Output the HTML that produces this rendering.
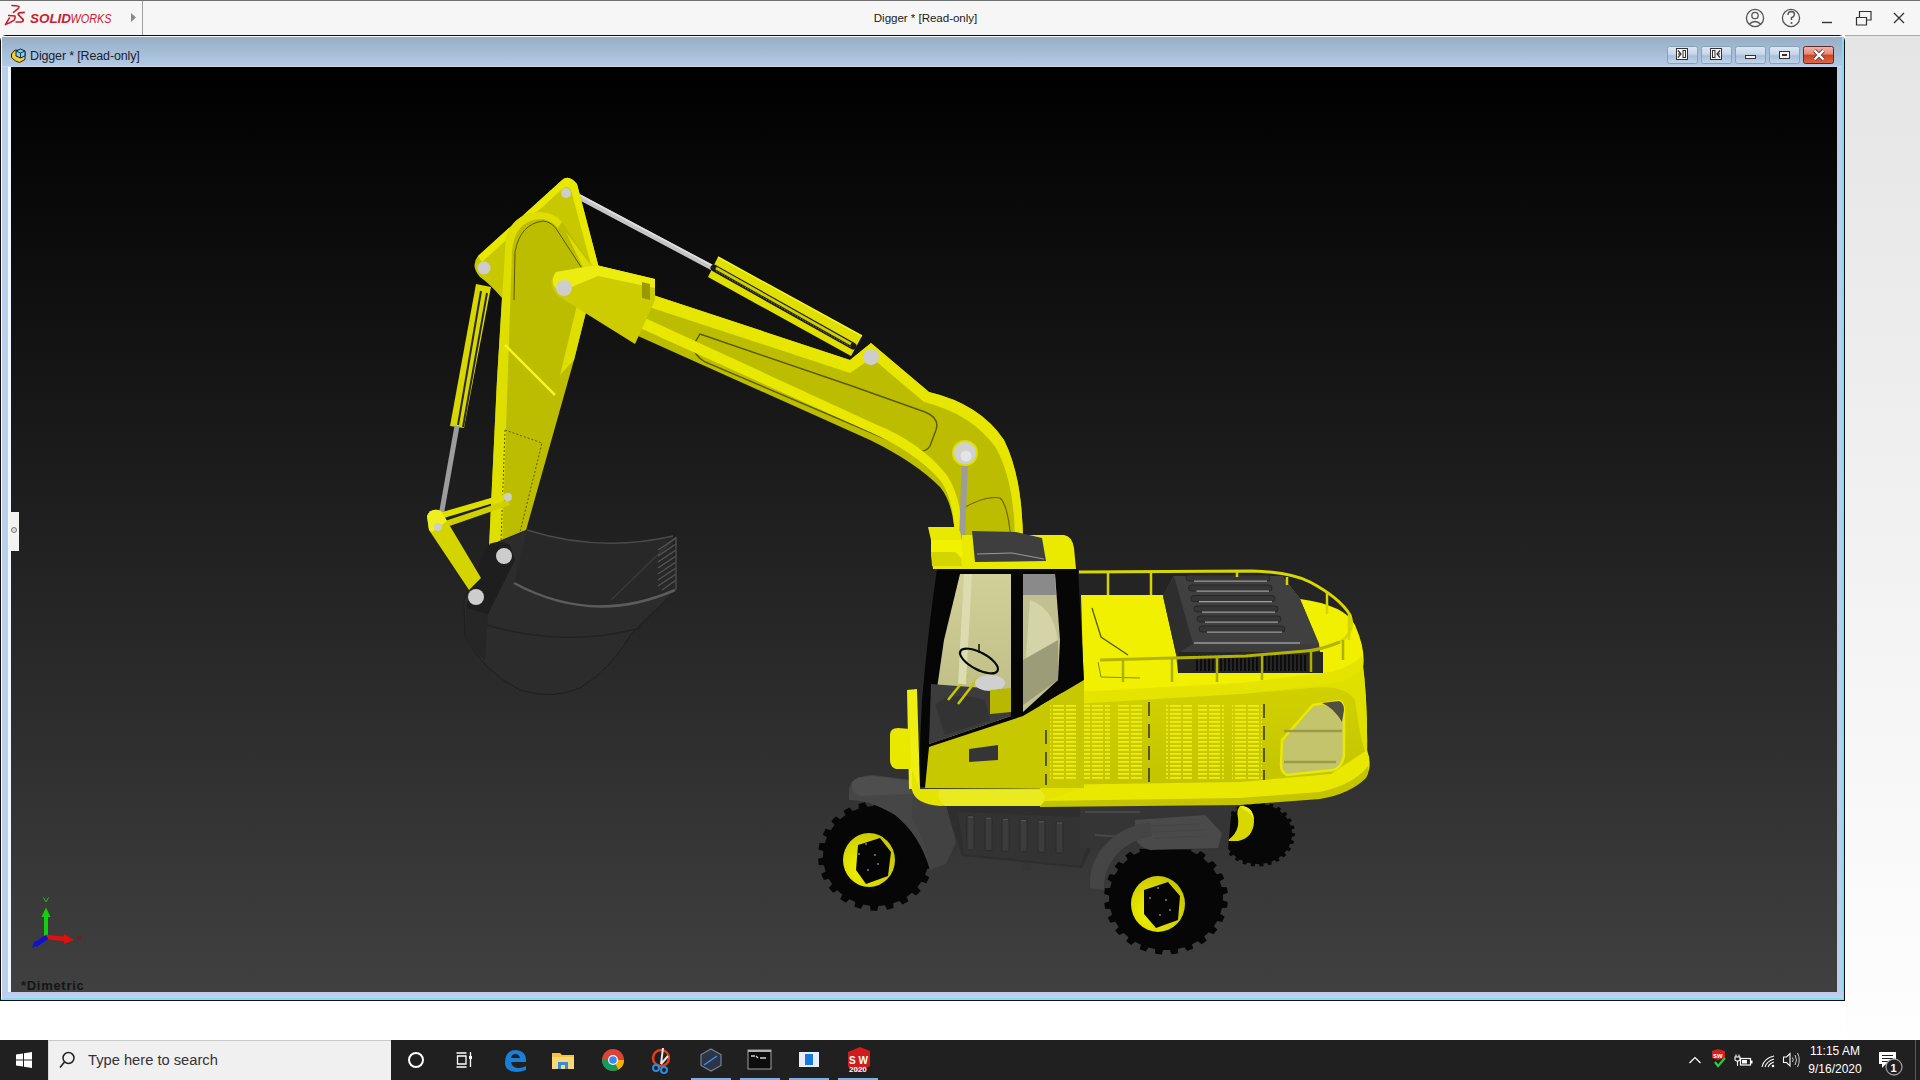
<!DOCTYPE html>
<html><head><meta charset="utf-8">
<style>
*{margin:0;padding:0;box-sizing:border-box}
html,body{width:1920px;height:1080px;overflow:hidden;background:#fff;font-family:"Liberation Sans",sans-serif;position:relative}
.a{position:absolute}
</style></head><body>
<!-- top bar -->
<div class="a" style="left:0;top:0;width:1920px;height:35px;background:#f6f6f6"></div>
<div class="a" style="left:0;top:0;width:1920px;height:1px;background:#707070"></div>
<div class="a" style="left:142px;top:1px;width:1px;height:34px;background:#a0a0a0"></div>
<svg class="a" style="left:0;top:0" width="145" height="35" viewBox="0 0 145 35">
  <path d="M11.9 5.4 Q16 5.6 18.9 6.4 Q19.2 8 18.1 8.7 L13.4 12.4" stroke="#c01e2c" stroke-width="1.5" fill="none" stroke-linecap="round"/>
  <path d="M8 15.5 Q12 15.4 15 16 Q15.5 18 14.2 20.1 Q10 23 5.4 24.6 L9.8 17.3" stroke="#c41e2c" stroke-width="1.6" fill="none" stroke-linejoin="round"/>
  <path d="M24.8 12.4 L19 12.9 Q17.8 13.5 18.3 14.6 L23.2 19.6 Q23.4 21.5 21.5 22 L15.5 22" stroke="#c41e2c" stroke-width="1.7" fill="none" stroke-linejoin="round"/>
  <text x="30" y="22.6" font-size="12.4" font-style="italic" font-weight="bold" fill="#c8202f" font-family="Liberation Sans" textLength="41" lengthAdjust="spacingAndGlyphs">SOLID</text>
  <text x="70.5" y="22.6" font-size="12.4" font-style="italic" fill="#c8202f" font-family="Liberation Sans" textLength="41" lengthAdjust="spacingAndGlyphs">WORKS</text>
  <path d="M131 13 L136 17.5 L131 22 Z" fill="#8a8a8a"/>
</svg>
<div class="a" style="left:0;top:11px;width:1851px;text-align:center;font-size:11.6px;color:#1a1a1a;letter-spacing:-0.05px">Digger * [Read-only]</div>
<svg class="a" style="left:1740px;top:0" width="180" height="35" viewBox="1740 0 180 35">
  <circle cx="1755" cy="18" r="8.6" stroke="#555" stroke-width="1.3" fill="none"/>
  <circle cx="1755" cy="15.5" r="3.2" stroke="#555" stroke-width="1.3" fill="none"/>
  <path d="M1749 24.5 Q1755 18.5 1761 24.5" stroke="#555" stroke-width="1.3" fill="none"/>
  <circle cx="1791" cy="18" r="8.6" stroke="#555" stroke-width="1.3" fill="none"/>
  <path d="M1788 15 Q1788 11.5 1791.5 11.5 Q1794.5 11.7 1794.5 14.5 Q1794.3 16.5 1791.5 17.8 L1791.5 20" stroke="#555" stroke-width="1.5" fill="none"/>
  <circle cx="1791.5" cy="23" r="1" fill="#555"/>
  <path d="M1822 22.5 H1832" stroke="#333" stroke-width="1.4"/>
  <path d="M1856.5 17.5 H1866.5 V25 H1856.5Z M1859.5 17.5 V11.5 H1871 V20 H1866.5" stroke="#333" stroke-width="1.2" fill="none"/>
  <path d="M1894 13 L1904 23 M1904 13 L1894 23" stroke="#333" stroke-width="1.3"/>
</svg>
<!-- right gradient area -->
<div class="a" style="left:1845px;top:35px;width:75px;height:1005px;background:linear-gradient(#e5e5e5,#fefefe)"></div>
<div class="a" style="left:1845px;top:35px;width:75px;height:1px;background:#a8a8a8"></div>
<!-- MDI window -->
<div class="a" style="left:0;top:35px;width:1845px;height:966px;background:#111;border-radius:6px 6px 0 0"></div>
<div class="a" style="left:1px;top:36px;width:1843px;height:964px;background:#bccfe8;border-radius:5px 5px 0 0"></div>
<div class="a" style="left:1px;top:36px;width:1843px;height:1px;background:#f4f8fc;border-radius:5px 5px 0 0"></div>
<div class="a" style="left:1px;top:37px;width:1px;height:962px;background:#f8fbff"></div>
<div class="a" style="left:2px;top:37px;width:1841px;height:29px;background:linear-gradient(#98aec6,#b2cae6)"></div>
<div class="a" style="left:2px;top:66px;width:1841px;height:1px;background:#c8d8ec"></div>
<div class="a" style="left:8px;top:67px;width:3px;height:926px;background:#f0f8ff"></div>
<div class="a" style="left:1842px;top:37px;width:2px;height:963px;background:#8ad8f4"></div>
<div class="a" style="left:2px;top:992px;width:1841px;height:6px;background:linear-gradient(#c4c8ee,#b4d8f0)"></div>
<div class="a" style="left:2px;top:998px;width:1841px;height:2px;background:#8adcf4"></div>
<svg class="a" style="left:10px;top:46px" width="18" height="18" viewBox="0 0 18 18">
  <path d="M1.5 8 L5 4 L9 4.5 L15 6 L15 13.5 L9.5 16.5 L5.5 15 L1.5 11.5Z" fill="#f6d030" stroke="#2a2000" stroke-width="1"/>
  <path d="M6 5 L10.5 3 L15 5 L15 10 L10.5 12 L6 10Z" fill="#7fd0e8" stroke="#0a2040" stroke-width="1"/>
  <path d="M6 5 L10.5 7 L15 5 M10.5 7 V12" stroke="#0a2040" stroke-width="0.9" fill="none"/>
</svg>
<div class="a" style="left:30px;top:49px;font-size:12.5px;color:#1a2030;letter-spacing:-0.15px">Digger * [Read-only]</div>
<svg class="a" style="left:1660px;top:40px" width="185" height="30" viewBox="1660 40 185 30">
  <defs>
    <linearGradient id="bg1" x1="0" y1="0" x2="0" y2="1"><stop offset="0" stop-color="#dde8f4"/><stop offset="0.45" stop-color="#c6d6ea"/><stop offset="0.55" stop-color="#a9bfda"/><stop offset="1" stop-color="#c2d5ec"/></linearGradient>
    <linearGradient id="bg2" x1="0" y1="0" x2="0" y2="1"><stop offset="0" stop-color="#f4b4a8"/><stop offset="0.45" stop-color="#e48a7a"/><stop offset="0.5" stop-color="#cc4422"/><stop offset="1" stop-color="#dc6a4c"/></linearGradient>
  </defs>
  <rect x="1667.5" y="46.5" width="30" height="17" rx="2" fill="url(#bg1)" stroke="#8aa0b8"/>
  <rect x="1701.5" y="46.5" width="30" height="17" rx="2" fill="url(#bg1)" stroke="#8aa0b8"/>
  <rect x="1735.5" y="46.5" width="30" height="17" rx="2" fill="url(#bg1)" stroke="#8aa0b8"/>
  <rect x="1769.5" y="46.5" width="30" height="17" rx="2" fill="url(#bg1)" stroke="#8aa0b8"/>
  <rect x="1803.5" y="46.5" width="30" height="17" rx="2" fill="url(#bg2)" stroke="#5a2a2a"/>
  <rect x="1676.5" y="48.5" width="11" height="11" fill="#f4f4f4" stroke="#333"/>
  <path d="M1678 50.5 L1681 54 L1678 57.5 M1681 54 H1678" stroke="#333" stroke-width="1.2" fill="none"/><rect x="1683" y="50.5" width="2.5" height="7" fill="none" stroke="#333" stroke-width="1"/>
  <rect x="1710.5" y="48.5" width="11" height="11" fill="#f4f4f4" stroke="#333"/>
  <path d="M1720 50.5 L1717 54 L1720 57.5 M1717 54 H1720" stroke="#333" stroke-width="1.2" fill="none"/><rect x="1712.5" y="50.5" width="2.5" height="7" fill="none" stroke="#333" stroke-width="1"/>
  <rect x="1745.5" y="55.5" width="10" height="3" fill="#f4f4f4" stroke="#333"/>
  <rect x="1779.5" y="51.5" width="10" height="7" fill="#f4f4f4" stroke="#333"/>
  <rect x="1782" y="54" width="5" height="2" fill="#333"/>
  <path d="M1814.5 50.5 L1823.5 59.5 M1823.5 50.5 L1814.5 59.5" stroke="#6a3a3a" stroke-width="4"/><path d="M1814.5 50.5 L1823.5 59.5 M1823.5 50.5 L1814.5 59.5" stroke="#fff" stroke-width="2.4"/>
</svg>
<!-- viewport -->
<div class="a" style="left:11px;top:67px;width:1826px;height:925px;background:linear-gradient(#000 0%,#404040 100%);overflow:hidden">
<svg class="a" style="left:0;top:0" width="1826" height="925" viewBox="11 67 1826 925">
<defs>
 <linearGradient id="glass" x1="0" y1="0" x2="0" y2="1"><stop offset="0" stop-color="#d0d098"/><stop offset="1" stop-color="#b8b880"/></linearGradient>
 <linearGradient id="wallg" x1="0" y1="0" x2="0" y2="1"><stop offset="0" stop-color="#d4d400"/><stop offset="1" stop-color="#c4c400"/></linearGradient>
 <radialGradient id="rimg" cx="0.35" cy="0.65" r="0.7"><stop offset="0" stop-color="#f4f400"/><stop offset="1" stop-color="#c8c800"/></radialGradient>
 <pattern id="vent" width="13" height="4" patternUnits="userSpaceOnUse"><rect x="0" y="1" width="11" height="1.8" fill="#eeee10"/></pattern>
 <pattern id="slits" width="4" height="20" patternUnits="userSpaceOnUse"><rect x="0" y="0" width="2" height="20" fill="#0c0c0c"/></pattern>
</defs>
<!-- ===== rear far tire ===== -->
<path d="M1291.3 840.0 L1294.1 841.1 L1293.2 844.0 L1290.1 843.8 L1288.7 846.8 L1288.7 846.8 L1291.1 848.5 L1289.5 851.2 L1286.5 850.3 L1284.4 852.9 L1284.4 852.9 L1286.2 855.1 L1283.9 857.3 L1281.3 855.9 L1278.5 858.0 L1278.5 858.0 L1279.7 860.5 L1276.8 862.1 L1274.7 860.1 L1271.4 861.6 L1271.4 861.6 L1271.9 864.3 L1268.6 865.3 L1267.1 862.9 L1263.5 863.6 L1263.5 863.6 L1263.3 866.3 L1259.8 866.6 L1259.0 864.0 L1255.3 863.9 L1255.3 863.9 L1254.3 866.5 L1250.9 866.0 L1250.8 863.3 L1247.3 862.5 L1247.3 862.5 L1245.6 864.8 L1242.4 863.6 L1243.1 861.0 L1239.9 859.4 L1239.9 859.4 L1237.6 861.3 L1234.9 859.5 L1236.2 857.0 L1233.5 854.8 L1233.5 854.8 L1230.8 856.2 L1228.6 853.9 L1230.6 851.8 L1228.6 849.0 L1228.6 849.0 L1225.6 849.8 L1224.1 847.1 L1226.6 845.5 L1225.4 842.4 L1225.4 842.4 L1222.3 842.5 L1221.5 839.5 L1224.4 838.5 L1224.0 835.2 L1224.0 835.2 L1221.0 834.7 L1221.1 831.7 L1224.1 831.3 L1224.7 828.0 L1224.7 828.0 L1221.9 826.9 L1222.8 824.0 L1225.9 824.2 L1227.3 821.2 L1227.3 821.2 L1224.9 819.5 L1226.5 816.8 L1229.5 817.7 L1231.6 815.1 L1231.6 815.1 L1229.8 812.9 L1232.1 810.7 L1234.7 812.1 L1237.5 810.0 L1237.5 810.0 L1236.3 807.5 L1239.2 805.9 L1241.3 807.9 L1244.6 806.4 L1244.6 806.4 L1244.1 803.7 L1247.4 802.7 L1248.9 805.1 L1252.5 804.4 L1252.5 804.4 L1252.7 801.7 L1256.2 801.4 L1257.0 804.0 L1260.7 804.1 L1260.7 804.1 L1261.7 801.5 L1265.1 802.0 L1265.2 804.7 L1268.7 805.5 L1268.7 805.5 L1270.4 803.2 L1273.6 804.4 L1272.9 807.0 L1276.1 808.6 L1276.1 808.6 L1278.4 806.7 L1281.1 808.5 L1279.8 811.0 L1282.5 813.2 L1282.5 813.2 L1285.2 811.8 L1287.4 814.1 L1285.4 816.2 L1287.4 819.0 L1287.4 819.0 L1290.4 818.2 L1291.9 820.9 L1289.4 822.5 L1290.6 825.6 L1290.6 825.6 L1293.7 825.5 L1294.5 828.5 L1291.6 829.5 L1292.0 832.8 L1292.0 832.8 L1295.0 833.3 L1294.9 836.3 L1291.9 836.7 L1291.3 840.0Z" fill="#070707"/>
<path d="M1240 806 Q1254 806 1254 822 Q1253 838 1238 841 L1227 841 Q1240 832 1238 818 Q1236 810 1240 806Z" fill="#d8d800"/>
<path d="M1240 806 Q1254 806 1254 822 Q1252 812 1244 810Z" fill="#f0f020"/>
<!-- ===== undercarriage ===== -->
<path d="M945 802 L1110 806 L1100 830 L1082 868 L962 856 Z" fill="#2e2e2e"/>
<path d="M958 812 L1098 818 L1080 866 L964 854Z" fill="#333333"/>
<rect x="967" y="816.0" width="7" height="34.0" rx="1.5" fill="#3c3c3c" stroke="#2a2a2a" stroke-width="0.8"/>
<path d="M968 817.0 H973" stroke="#555" stroke-width="1.2"/>
<rect x="985" y="817.2" width="7" height="33.4" rx="1.5" fill="#3c3c3c" stroke="#2a2a2a" stroke-width="0.8"/>
<path d="M986 818.2 H991" stroke="#555" stroke-width="1.2"/>
<rect x="1002" y="818.4" width="7" height="32.8" rx="1.5" fill="#3c3c3c" stroke="#2a2a2a" stroke-width="0.8"/>
<path d="M1003 819.4 H1008" stroke="#555" stroke-width="1.2"/>
<rect x="1020" y="819.6" width="7" height="32.2" rx="1.5" fill="#3c3c3c" stroke="#2a2a2a" stroke-width="0.8"/>
<path d="M1021 820.6 H1026" stroke="#555" stroke-width="1.2"/>
<rect x="1038" y="820.8" width="7" height="31.6" rx="1.5" fill="#3c3c3c" stroke="#2a2a2a" stroke-width="0.8"/>
<path d="M1039 821.8 H1044" stroke="#555" stroke-width="1.2"/>
<rect x="1056" y="822.0" width="7" height="31.0" rx="1.5" fill="#3c3c3c" stroke="#2a2a2a" stroke-width="0.8"/>
<path d="M1057 823.0 H1062" stroke="#555" stroke-width="1.2"/>
<circle cx="1027" cy="867" r="4" fill="#353535"/>
<!-- ===== left front tire ===== -->
<g>
<path d="M928.7 861.0 L933.6 862.6 L932.4 868.9 L927.3 868.7 L925.1 874.8 L925.1 874.8 L929.3 877.6 L926.3 883.3 L921.4 881.8 L917.5 887.1 L917.5 887.1 L920.7 890.9 L916.1 895.6 L911.8 892.8 L906.5 896.9 L906.5 896.9 L908.5 901.3 L902.6 904.6 L899.4 900.9 L893.1 903.3 L893.1 903.3 L893.6 908.1 L887.0 909.7 L885.0 905.3 L878.3 906.0 L878.3 906.0 L877.3 910.7 L870.5 910.5 L870.0 905.7 L863.3 904.5 L863.3 904.5 L860.9 908.8 L854.5 906.8 L855.4 902.1 L849.3 899.2 L849.3 899.2 L845.8 902.7 L840.2 899.0 L842.4 894.7 L837.5 890.3 L837.5 890.3 L833.0 892.8 L828.8 887.8 L832.2 884.2 L828.8 878.7 L828.8 878.7 L823.8 879.9 L821.2 873.9 L825.6 871.4 L823.9 865.2 L823.9 865.2 L818.8 865.0 L818.1 858.7 L823.0 857.4 L823.3 851.0 L823.3 851.0 L818.4 849.4 L819.6 843.1 L824.7 843.3 L826.9 837.2 L826.9 837.2 L822.7 834.4 L825.7 828.7 L830.6 830.2 L834.5 824.9 L834.5 824.9 L831.3 821.1 L835.9 816.4 L840.2 819.2 L845.5 815.1 L845.5 815.1 L843.5 810.7 L849.4 807.4 L852.6 811.1 L858.9 808.7 L858.9 808.7 L858.4 803.9 L865.0 802.3 L867.0 806.7 L873.7 806.0 L873.7 806.0 L874.7 801.3 L881.5 801.5 L882.0 806.3 L888.7 807.5 L888.7 807.5 L891.1 803.2 L897.5 805.2 L896.6 809.9 L902.7 812.8 L902.7 812.8 L906.2 809.3 L911.8 813.0 L909.6 817.3 L914.5 821.7 L914.5 821.7 L919.0 819.2 L923.2 824.2 L919.8 827.8 L923.2 833.3 L923.2 833.3 L928.2 832.1 L930.8 838.1 L926.4 840.6 L928.1 846.8 L928.1 846.8 L933.2 847.0 L933.9 853.3 L929.0 854.6 L928.7 861.0Z" fill="#060606"/>
<ellipse cx="869" cy="860" rx="26" ry="27" fill="url(#rimg)"/>
<path d="M858 845 L880 838 L891 852 L888 876 L866 884 L856 870 Z" fill="#050505"/>
<g fill="#8888aa"><circle cx="859" cy="854" r="0.9"/><circle cx="866" cy="844" r="0.9"/><circle cx="875" cy="855" r="0.9"/><circle cx="878" cy="864" r="0.9"/><circle cx="868" cy="870" r="0.9"/></g>
</g>
<!-- ===== near front tire ===== -->
<g>
<path d="M1222.9 900.6 L1227.8 902.0 L1227.1 907.8 L1221.9 908.0 L1220.3 914.0 L1220.3 914.0 L1224.6 916.4 L1222.2 921.9 L1217.2 920.9 L1213.9 926.2 L1213.9 926.2 L1217.4 929.6 L1213.5 934.3 L1208.9 932.2 L1204.2 936.6 L1204.2 936.6 L1206.7 940.7 L1201.6 944.3 L1197.8 941.2 L1192.0 944.3 L1192.0 944.3 L1193.2 948.8 L1187.2 951.1 L1184.4 947.2 L1178.0 948.8 L1178.0 948.8 L1177.8 953.5 L1171.4 954.3 L1169.9 949.9 L1163.2 949.9 L1163.2 949.9 L1161.7 954.4 L1155.3 953.7 L1155.0 949.0 L1148.5 947.5 L1148.5 947.5 L1145.8 951.5 L1139.8 949.3 L1140.9 944.7 L1135.1 941.7 L1135.1 941.7 L1131.3 944.9 L1126.2 941.3 L1128.5 937.2 L1123.7 932.9 L1123.7 932.9 L1119.2 935.1 L1115.2 930.5 L1118.7 927.0 L1115.3 921.7 L1115.3 921.7 L1110.3 922.8 L1107.8 917.4 L1112.1 914.8 L1110.3 908.9 L1110.3 908.9 L1105.1 908.8 L1104.2 903.0 L1109.1 901.5 L1109.1 895.4 L1109.1 895.4 L1104.2 894.0 L1104.9 888.2 L1110.1 888.0 L1111.7 882.0 L1111.7 882.0 L1107.4 879.6 L1109.8 874.1 L1114.8 875.1 L1118.1 869.8 L1118.1 869.8 L1114.6 866.4 L1118.5 861.7 L1123.1 863.8 L1127.8 859.4 L1127.8 859.4 L1125.3 855.3 L1130.4 851.7 L1134.2 854.8 L1140.0 851.7 L1140.0 851.7 L1138.8 847.2 L1144.8 844.9 L1147.6 848.8 L1154.0 847.2 L1154.0 847.2 L1154.2 842.5 L1160.6 841.7 L1162.1 846.1 L1168.8 846.1 L1168.8 846.1 L1170.3 841.6 L1176.7 842.3 L1177.0 847.0 L1183.5 848.5 L1183.5 848.5 L1186.2 844.5 L1192.2 846.7 L1191.1 851.3 L1196.9 854.3 L1196.9 854.3 L1200.7 851.1 L1205.8 854.7 L1203.5 858.8 L1208.3 863.1 L1208.3 863.1 L1212.8 860.9 L1216.8 865.5 L1213.3 869.0 L1216.7 874.3 L1216.7 874.3 L1221.7 873.2 L1224.2 878.6 L1219.9 881.2 L1221.7 887.1 L1221.7 887.1 L1226.9 887.2 L1227.8 893.0 L1222.9 894.5 L1222.9 900.6Z" fill="#060606"/>
<ellipse cx="1158" cy="904" rx="27" ry="28" fill="url(#rimg)"/>
<path d="M1144 890 L1168 882 L1180 896 L1178 920 L1156 928 L1144 914 Z" fill="#050505"/>
<g fill="#8888aa"><circle cx="1150" cy="898" r="0.9"/><circle cx="1158" cy="888" r="0.9"/><circle cx="1166" cy="900" r="0.9"/><circle cx="1170" cy="910" r="0.9"/><circle cx="1160" cy="915" r="0.9"/></g>
</g>
<!-- ===== fenders ===== -->
<path d="M849 790 Q850 777 872 775 L912 780 L920 798 L946 806 L955 840 L946 862 L930 870 Q920 835 895 815 Q870 800 849 800Z" fill="#464646"/>
<path d="M852 782 Q856 776 872 776 L910 781 L915 794 L860 796 Q850 792 852 782Z" fill="#4e4e4e"/>
<path d="M912 798 L946 806 L956 842 L946 864 L930 870 Q926 840 912 820Z" fill="#424242"/>
<path d="M1080 806 L1232 804 L1228 850 L1080 848 Z" fill="#353535"/>
<path d="M1085 812 L1140 812 M1095 835 L1140 838" stroke="#484848" stroke-width="2"/>
<path d="M1135 820 L1205 815 L1222 833 L1218 848 L1150 850 Q1136 846 1135 836 Z" fill="#4a4a4a"/>
<path d="M1150 826 L1200 824 M1152 832 L1204 830 M1154 838 L1208 836" stroke="#444" stroke-width="1"/>
<path d="M1090 888 Q1088 860 1110 840 Q1125 826 1150 822 L1152 836 Q1130 840 1117 854 Q1103 870 1104 890 Z" fill="#454545"/>


<!-- ===== boom ===== -->
<path d="M650 294 L850 360 L871 343 L929 392 Q980 404 1004 440 Q1023 478 1023 545 L955 545 Q955 505 940 487 Q915 462 870 440 L638 336 Z" fill="#bcbc00"/>
<path d="M650 294 L850 360 L871 343 L929 392 Q980 404 1004 440 Q1023 478 1023 545 L1015 545 Q1015 482 996 448 Q972 414 924 402 L872 358 L850 373 L646 306 Z" fill="#e6e600"/>
<path d="M700 334 L852 386 L925 412 Q940 418 936 430 L930 446 Q925 454 912 450 L705 362 Q692 354 694 344 Z" fill="none" stroke="#5a5a00" stroke-width="1.4"/>
<path d="M640 328 L870 432 Q915 452 940 480 Q955 500 955 545 L963 545 Q963 498 946 474 Q920 442 875 424 L645 318 Z" fill="#e8e800"/>
<path d="M960 510 Q985 495 1000 498 Q1008 505 1011 540" fill="none" stroke="#6a6a00" stroke-width="1.2"/>
<!-- boom pin + rod -->
<path d="M965 458 L962 540" stroke="#9c9c9c" stroke-width="6"/>
<circle cx="965" cy="453" r="13" fill="#dede00"/>
<circle cx="965" cy="453" r="11" fill="#d0d0d0"/>
<circle cx="966" cy="456" r="5.5" fill="#e4e4e4"/>
<!-- ===== body ===== -->
<!-- deck -->
<path d="M1081 595 L1164 595 L1174 576 L1282 576 L1300 599 Q1345 605 1355 625 Q1366 650 1363 668 L1330 676 L1240 686 L1084 697 Z" fill="#f0f000"/>
<!-- hood -->
<path d="M1174 576 L1282 576 L1300 599 L1319 644 L1323 673 L1178 673 L1176 654 L1163 596 Z" fill="#3c3c3c"/>
<path d="M1174 576 L1282 576 L1300 599 L1319 644 L1193 644 Z" fill="#404040"/>
<path d="M1163 596 L1174 576 L1193 644 L1176 654Z" fill="#2e2e2e"/>
<path d="M1178 652 L1323 652 L1323 673 L1178 673 Z" fill="#262626"/>
<rect x="1196" y="655" width="112" height="16" fill="url(#slits)"/>
<rect x="1186.0" y="575.0" width="84.0" height="6" rx="3" fill="#363636" stroke="#262626" stroke-width="1"/>
<path d="M1194.0 581.2 H1267.0" stroke="#a0a0a0" stroke-width="1.2"/>
<rect x="1188.5" y="585.0" width="83.5" height="6" rx="3" fill="#363636" stroke="#262626" stroke-width="1"/>
<path d="M1196.5 591.2 H1269.0" stroke="#a0a0a0" stroke-width="1.2"/>
<rect x="1191.0" y="595.5" width="84.0" height="6" rx="3" fill="#363636" stroke="#262626" stroke-width="1"/>
<path d="M1199.0 601.7 H1272.0" stroke="#a0a0a0" stroke-width="1.2"/>
<rect x="1194.0" y="606.0" width="84.0" height="6" rx="3" fill="#363636" stroke="#262626" stroke-width="1"/>
<path d="M1202.0 612.2 H1275.0" stroke="#a0a0a0" stroke-width="1.2"/>
<rect x="1197.0" y="616.0" width="84.0" height="6" rx="3" fill="#363636" stroke="#262626" stroke-width="1"/>
<path d="M1205.0 622.2 H1278.0" stroke="#a0a0a0" stroke-width="1.2"/>
<rect x="1199.0" y="626.0" width="86.0" height="6" rx="3" fill="#363636" stroke="#262626" stroke-width="1"/>
<path d="M1207.0 632.2 H1282.0" stroke="#a0a0a0" stroke-width="1.2"/>
<path d="M1194 643 H1300" stroke="#9a9a9a" stroke-width="1.5"/>
<!-- side wall -->
<path d="M1040 697 L1240 686 L1331 675 Q1352 668 1362 658 Q1368 700 1367 757 L1331 775 L1240 783 L1040 786 Z" fill="url(#wallg)"/>
<path d="M1240 686 L1331 675 Q1352 668 1362 658 Q1368 700 1367 757 Q1360 740 1355 700 Q1345 684 1310 688 L1240 694Z" fill="#e0e000"/>
<path d="M1040 694 L1240 683 L1331 672 Q1352 666 1362 656 L1363 668 Q1350 680 1331 684 L1240 694 L1040 706Z" fill="#e4e400"/>
<!-- vents -->

<!-- right window -->
<path d="M1282 740 L1313 705 L1339 701 Q1344 703 1344 710 L1344 755 Q1342 768 1333 770 L1287 775 Q1281 772 1281 765 Z" fill="#c4c46c" stroke="#eaea00" stroke-width="2.5"/>
<path d="M1284 731 H1342 M1284 762 H1336" stroke="#9a9a48" stroke-width="2.5"/>
<path d="M1322 703 L1339 701 Q1344 703 1344 710 L1342 722 Q1334 708 1322 703Z" fill="#505040"/>
<!-- bottom rim -->
<path d="M1040 785 L1240 782 L1331 774 L1367 750 Q1371 760 1369 770 Q1355 788 1320 794 L1240 801 L1040 803 Z" fill="#e8e800"/>
<path d="M1040 801 L1240 798 L1320 792 Q1355 784 1368 766 Q1370 772 1366 778 Q1350 794 1320 799 L1240 805 L1040 807Z" fill="#c4c400"/>
<!-- railings -->
<path d="M1092 608 L1101 637 L1128 655" fill="none" stroke="#5a5a00" stroke-width="1.3"/>
<path d="M1098 662 L1101 677 L1140 678" fill="none" stroke="#8a8a00" stroke-width="1"/>
<path d="M1079 572 L1252 571 Q1290 572 1310 582 Q1340 598 1350 615 Q1356 632 1340 642" fill="none" stroke="#d8d800" stroke-width="3"/>
<path d="M1340 642 Q1320 650 1306 651 L1246 656 L1100 660" fill="none" stroke="#b4b400" stroke-width="3"/>
<g stroke="#d4d400" stroke-width="2.5"><path d="M1108 573 V595 M1151 573 V595 M1237 572 V577 M1287 577 V585 M1327 592 V614 M1349 615 V640"/></g><g stroke="#b0b000" stroke-width="2.5"><path d="M1123 660 V682 M1172 658 V682 M1217 657 V682 M1262 655 V680 M1311 651 V672 M1343 640 V660"/></g>
<!-- ===== cab ===== -->
<path d="M937 569 L1078 569 L1084 680 L1023 716 L929 747 L931 787 L918 787 L922 700 Q928 630 937 569 Z" fill="#060606"/>
<path d="M960 574 L1011 574 L1011 716 L929 744 L944 640 Z" fill="url(#glass)"/>
<path d="M1023 574 L1055 574 L1060 640 L1058 680 L1023 712 Z" fill="#c0c090"/>
<path d="M1023 574 L1055 574 L1056 595 L1023 595 Z" fill="#8a8a8a"/>
<path d="M1030 600 Q1058 610 1058 650 Q1050 690 1023 700 Z" fill="#d4d4a8"/>
<path d="M931 684 L1011 690 L1011 716 L929 744 Z" fill="#3c3c3c"/>
<path d="M935 705 Q950 690 985 700 L990 720 L945 735Z" fill="#333"/>
<path d="M948 700 L968 675 M958 704 L978 678" stroke="#c8c800" stroke-width="2.5"/>
<ellipse cx="990" cy="683" rx="15" ry="8" fill="#d0d0d0"/>
<path d="M964 574 L972 574 L966 684 L958 684Z" fill="#dcdcb0"/>
<path d="M1023 660 L1058 640 L1058 680 L1023 705Z" fill="#9c9c78"/>
<path d="M990 690 L1011 688 L1011 712 L990 714Z" fill="#b8b800"/>
<path d="M979 653 L979 644" stroke="#111" stroke-width="1.5"/>
<ellipse cx="979" cy="661" rx="21" ry="8.5" transform="rotate(28 979 661)" fill="none" stroke="#0a0a0a" stroke-width="2.2"/>
<path d="M1011 574 L1023 574 L1023 716 L1011 720Z" fill="#060606"/>
<path d="M929 747 L1023 716 L1084 680 L1084 788 L925 788 Z" fill="#c8c800"/>
<path d="M969 749 L998 745 L998 760 L969 762 Z" fill="#353535"/>
<g fill="url(#vent)"><rect x="1050" y="705" width="26" height="76"/><rect x="1084" y="705" width="26" height="76"/><rect x="1117" y="705" width="26" height="76"/><rect x="1166" y="703" width="26" height="77"/><rect x="1198" y="703" width="26" height="77"/><rect x="1232" y="703" width="30" height="77"/></g>
<path d="M1149 702 V782 M1264 704 V780 M1046 730 V785" stroke="#1a1a1a" stroke-width="1.3" stroke-dasharray="14 8"/>
<path d="M907 690 L917 689 L920 789 L909 789 Z" fill="#eeee10"/>
<path d="M890 735 Q890 728 898 728 L910 729 L911 769 L896 769 Q890 767 890 760 Z" fill="#e8e800"/>
<!-- roof -->
<path d="M962 535 L1064 535 Q1072 536 1074 548 L1076 569 L933 569 L931 552 L960 552 Z" fill="#eaea00"/>
<path d="M928 527 L955 527 Q962 530 961 540 L931 540 Z" fill="#e8e800"/>
<path d="M931 540 L961 540 L963 556 L931 556 Z" fill="#f2f200"/>
<path d="M931 552 L955 552 Q962 556 962 566 L932 566 Z" fill="#d4d400"/>
<path d="M972 531 L1016 532 L1042 538 L1046 561 L975 562 Z" fill="#3e3e3e"/>
<path d="M977 554 L1012 553 L1044 559" stroke="#9a9a9a" stroke-width="1" fill="none"/>
<!-- sill -->
<path d="M912 770 L920 789 L1084 788 L1040 802 L940 806 Q915 804 912 790 Z" fill="#e4e400"/>
<path d="M940 790 L1040 790 Q1050 798 1040 806 L945 806 Q935 798 940 790Z" fill="#eaea20"/>
<path d="M570 192 L713 268" stroke="#c4c4c4" stroke-width="5.5"/>
<path d="M570 190 L713 266" stroke="#e0e0e0" stroke-width="1.5"/>
<!-- ===== stick plate ===== -->
<path d="M561 181 Q568 173 577 184 L600 272 L560 292 L502 298 Q490 284 480 277 Q470 266 478 256 Z" fill="#c8c800"/>
<path d="M561 181 Q568 173 577 184 L600 272 L593 272 L571 190 Q567 184 561 190 L482 262 L478 256 Z" fill="#e8e800"/>
<!-- stick body -->
<path d="M505 250 Q506 214 540 212 Q554 212 562 222 L596 272 L574 360 L521 548 L489 548 L497 380 Z" fill="#bcbc00"/>
<path d="M505 250 Q506 214 540 212 Q554 212 562 222 L558 228 Q550 219 540 219 Q514 221 512 252 L502 548 L489 548 L497 380 Z" fill="#dede00"/>
<path d="M566 232 L596 272 L574 360 L560 375 L585 272 Z" fill="#dede00"/>
<path d="M514 300 L515 252 Q520 224 543 221 Q552 222 557 230 L583 270" fill="none" stroke="#5a5a00" stroke-width="1"/>
<path d="M505 345 L555 395" stroke="#f4f420" stroke-width="2.5"/>
<path d="M505 430 L542 443 L518 540 M505 430 L501 542" fill="none" stroke="#5a5a00" stroke-width="1" stroke-dasharray="2 2"/>
<!-- boom bracket -->
<path d="M556 272 Q546 284 558 296 L635 344 L655 300 L655 279 L596 265 Z" fill="#cccc00"/>
<path d="M556 272 L596 265 L655 279 L655 288 L598 276 L560 292 Q548 284 556 272Z" fill="#ecec10"/>
<path d="M642 282 L650 284 L650 300 L642 298Z" fill="#9a9a00"/>
<!-- boom cylinder + rod -->
<path d="M718 257 L708 277 L851 356 L862 336 Z" fill="#e0e000"/>
<path d="M718 257 L862 336" stroke="#f4f430" stroke-width="1.5"/>
<path d="M714 268 L853 346" stroke="#1a1a1a" stroke-width="7" stroke-linecap="round"/>
<path d="M716 268 L851 344" stroke="#d0d000" stroke-width="3"/>
<path d="M716 271 L851 347" stroke="#888" stroke-width="0.8" stroke-dasharray="1.5 1.5"/>
<!-- bucket cylinder -->
<path d="M476 284 L491 287 L464 428 L450 426 Z" fill="#d8d800"/>
<path d="M481 291 L458 425 M487 293 L463 427" stroke="#2a2a2a" stroke-width="2"/>
<path d="M457 426 L441 516" stroke="#9c9c9c" stroke-width="5"/>
<!-- bucket -->
<path d="M498 542 L527 530 Q600 552 673 536 L676 590 L631 634 Q610 670 580 688 Q554 700 520 690 Q484 672 465 637 L464 601 L471 584 Z" fill="#2c2c2c" stroke="#1e1e1e" stroke-width="1"/>
<path d="M527 530 Q600 553 673 536 L676 590 Q593 626 514 583 Z" fill="#282828"/>
<path d="M527 530 Q600 553 673 536" stroke="#4a4a4a" stroke-width="1.5" fill="none"/>
<path d="M514 583 Q593 626 675 590" stroke="#5c5c5c" stroke-width="2.5" fill="none"/>
<path d="M470 620 Q560 650 640 628" stroke="#222" stroke-width="1.5" fill="none"/>
<path d="M611 600 L676 537" stroke="#3a3a3a" stroke-width="1.2"/>
<g stroke="#555" stroke-width="1.2"><path d="M658 550 L676 538 M658 556 L676 544 M658 562 L676 550 M658 568 L676 556 M658 574 L676 562 M658 580 L676 568 M658 586 L676 574 M662 590 L676 580"/></g>
<path d="M676 537 L676 590" stroke="#4a4a4a" stroke-width="1.5"/>
<path d="M485 548 Q496 537 510 545 L515 560 L488 614 Q472 618 466 606 Z" fill="#1e1e1e"/>
<path d="M466 608 L488 614 L485 660 Q470 650 465 637 Z" fill="#262626"/>
<!-- links -->
<path d="M432 515 L508 493 L510 498 L434 521 Z" fill="#e0e000"/>
<path d="M436 524 L508 500 L510 505 L438 530 Z" fill="#d0d000"/>
<path d="M427 516 Q431 507 441 511 L481 578 L469 590 L429 530 Z" fill="#d4d400"/>
<path d="M427 516 Q431 507 441 511 L447 521 L432 532 L429 530 Z" fill="#eeee20"/>
<!-- pins -->
<g fill="#cdcdcd">
<circle cx="566" cy="193" r="5"/>
<circle cx="484" cy="268" r="6.5"/>
<circle cx="564" cy="288" r="8"/>
<circle cx="871" cy="357" r="8"/>
<circle cx="508" cy="497" r="4"/>
<circle cx="438" cy="527" r="4"/>
<circle cx="504" cy="556" r="8"/>
<circle cx="476" cy="597" r="8"/>
</g>

</svg>
</div>
<!-- left collapse tab -->
<div class="a" style="left:10px;top:512px;width:9px;height:39px;background:#f2f2f0"></div>
<div class="a" style="left:11px;top:527px;width:6px;height:6px;border:1px solid #777;border-radius:50%;background:#ddd"></div>
<!-- triad -->
<svg class="a" style="left:25px;top:890px" width="70" height="65" viewBox="25 890 70 65">
  <path d="M46 937 V914" stroke="#10d010" stroke-width="4"/>
  <path d="M41.5 917 L46 907.5 L50.5 917 Z" fill="#10d010"/>
  <path d="M43.5 897.5 L46 902 L48.5 897.5" stroke="#20c020" stroke-width="1" fill="none"/>
  <path d="M46 937 L66 939" stroke="#e01010" stroke-width="4.5"/>
  <path d="M64 934 L74 940 L64 944 Z" fill="#e01010"/>
  <circle cx="79" cy="938" r="2" fill="#702020"/>
  <path d="M47 937 L35 945" stroke="#1010d0" stroke-width="5"/>
  <path d="M32 948 L35 941 L41 943Z" fill="#1010d0"/>
</svg>
<div class="a" style="left:21px;top:978px;font-size:13px;font-weight:bold;color:#151515;letter-spacing:0.7px">*Dimetric</div>
<!-- taskbar -->
<div class="a" style="left:0;top:1040px;width:1920px;height:40px;background:#202020"></div>
<div class="a" style="left:48px;top:1040px;width:343px;height:40px;background:#f0f0f0;border-top:1px solid #c8c8c8;border-left:1px solid #d8d8d8"></div>
<div class="a" style="left:88px;top:1052px;font-size:14.7px;color:#333">Type here to search</div>
<svg class="a" style="left:0;top:1040px" width="1920" height="40" viewBox="0 1040 1920 40">
  <path d="M16 1054.5 L23 1053.5 V1059.5 H16Z M24 1053.3 L32 1052 V1059.5 H24Z M16 1060.5 H23 V1066.5 L16 1065.5Z M24 1060.5 H32 V1068 L24 1066.7Z" fill="#fff"/>
  <circle cx="68.5" cy="1058" r="5.5" stroke="#222" stroke-width="1.5" fill="none"/>
  <path d="M64.5 1062 L60 1067.5" stroke="#222" stroke-width="1.6"/>
  <circle cx="416" cy="1060" r="7" stroke="#fff" stroke-width="2" fill="none"/>
  <path d="M456.5 1053 H466.5 M456.5 1067 H466.5 M457.5 1056 H466 V1064 H457.5Z M470.5 1052 V1067" stroke="#fff" stroke-width="1.3" fill="none"/>
  <rect x="469" y="1056" width="3" height="3" fill="#fff"/>
  <path d="M505 1063 Q505 1050 516 1050 Q527 1051 526 1062 L511 1062 Q512 1068 519 1068 Q523 1068 526 1066 L526 1070 Q521 1072 516 1072 Q505 1071 505 1063Z M511 1058 H520 Q519 1054 515.5 1054 Q512 1054 511 1058Z" fill="#1a7fd8"/>
  <path d="M552 1053 H560 L562 1055 H574 V1069 H552 Z" fill="#f4c445"/>
  <path d="M552 1057 H574 V1069 H552 Z" fill="#f8d878"/>
  <path d="M558 1069 V1062 H568 V1069 H565 V1065 H561 V1069 Z" fill="#3a8ad8"/>
  <circle cx="613" cy="1060" r="11" fill="#db4437"/>
  <path d="M613 1060 L603.5 1065.5 A11 11 0 0 0 618.5 1069.5 Z" fill="#0f9d58"/>
  <path d="M613 1060 L618.5 1069.5 A11 11 0 0 0 624 1060 L613 1060 Z" fill="#f4b400"/>
  <path d="M613 1060 L602 1060 A11 11 0 0 0 603.5 1065.5 Z" fill="#0f9d58"/>
  <circle cx="613" cy="1060" r="5" fill="#fff"/>
  <circle cx="613" cy="1060" r="3.8" fill="#4285f4"/>
  <circle cx="661" cy="1058" r="8" stroke="#e0401a" stroke-width="2.5" fill="none"/>
  <path d="M663 1048 L661 1064 M668 1056 L661 1064" stroke="#e8e8e8" stroke-width="2"/>
  <circle cx="656" cy="1068" r="3" stroke="#2a8ae0" stroke-width="2" fill="none"/>
  <circle cx="664" cy="1070" r="3" stroke="#2a8ae0" stroke-width="2" fill="none"/>
  <path d="M711 1049 L721 1054.5 V1065.5 L711 1071 L701 1065.5 V1054.5 Z" fill="#2c3448" stroke="#7a8090" stroke-width="1.2"/>
  <path d="M704 1065 L717 1056" stroke="#4a8ae8" stroke-width="1.5"/>
  <rect x="748" y="1050" width="23" height="19" fill="#0c0c0c" stroke="#a0a0a0" stroke-width="1"/>
  <rect x="748" y="1050" width="23" height="2" fill="#b0b0b0"/>
  <path d="M751 1056 H755 M756 1056 L758 1058 M760 1058 H766" stroke="#d0d0d0" stroke-width="1.3"/>
  <rect x="799" y="1052" width="20" height="15" fill="#e8eef8"/>
  <rect x="805" y="1054" width="8" height="11" fill="#1a78e0"/>
  <path d="M848 1052 L860 1047 L870 1051 V1066 L858 1072 L848 1067 Z" fill="#d01c1c"/>
  <text x="849" y="1064" font-size="10" font-weight="bold" fill="#fff" font-family="Liberation Sans">S W</text>
  <text x="849" y="1071.5" font-size="8" font-weight="bold" fill="#fff" font-family="Liberation Sans">2020</text>
  <rect x="691" y="1078" width="40" height="2" fill="#7eb0e4"/>
  <rect x="740" y="1078" width="40" height="2" fill="#7eb0e4"/>
  <rect x="789" y="1078" width="40" height="2" fill="#7eb0e4"/>
  <rect x="838" y="1078" width="40" height="2" fill="#7eb0e4"/>
  <path d="M1689.5 1063 L1695 1057.5 L1700.5 1063" stroke="#fff" stroke-width="1.2" fill="none"/>
  <path d="M1712 1051 L1718 1049 L1725 1051 L1725 1058 L1718 1060 L1712 1058Z" fill="#d02020"/>
  <text x="1713" y="1058" font-size="7" font-weight="bold" fill="#fff" font-family="Liberation Sans">sw</text>
  <path d="M1715 1062 L1718 1066 L1725 1058" stroke="#20d040" stroke-width="2.2" fill="none"/>
  <path d="M1736 1054.5 V1057 M1739 1054.5 V1057 M1735 1057 H1740 V1059.5 Q1740 1061 1737.5 1061 Q1735 1061 1735 1059.5 Z M1737.5 1061 V1066" stroke="#fff" stroke-width="1.1" fill="none"/>
  <rect x="1740.5" y="1058.5" width="10" height="6.5" fill="none" stroke="#fff" stroke-width="1.2"/>
  <rect x="1742" y="1060" width="5" height="3.5" fill="#fff"/>
  <rect x="1751" y="1060.5" width="1.5" height="3" fill="#fff"/>
  <path d="M1762 1067 Q1764 1058 1774 1056 M1765 1067 Q1767 1061 1774 1059 M1768 1067 Q1770 1063 1774 1062" stroke="#fff" stroke-width="1.1" fill="none"/>
  <circle cx="1773" cy="1066" r="1.3" fill="#fff"/>
  <path d="M1783.5 1057 H1786.5 L1790 1053.5 V1066 L1786.5 1062.5 H1783.5Z" stroke="#fff" stroke-width="1.1" fill="none"/>
  <path d="M1792.5 1057.5 Q1794 1060 1792.5 1062 M1795 1055 Q1798 1060 1795 1065 M1797.5 1053 Q1801 1060 1797.5 1067" stroke="#ccc" stroke-width="1" fill="none"/>
  <path d="M1879 1052 H1896 V1064 H1886 L1882 1068 V1064 H1879Z" fill="#fff"/>
  <path d="M1882 1055.5 H1893 M1882 1058.5 H1893 M1882 1061.5 H1890" stroke="#202020" stroke-width="1"/>
  <circle cx="1894" cy="1067" r="8" fill="#202020" stroke="#9a9a9a" stroke-width="1.3"/>
  <text x="1890.5" y="1071.5" font-size="11" font-weight="bold" fill="#fff" font-family="Liberation Sans">1</text>
  <rect x="1915" y="1040" width="1" height="40" fill="#5a5a5a"/>
</svg>
<div class="a" style="left:1790px;top:1042px;width:90px;text-align:center;color:#fff;font-size:12px;line-height:18px">11:15 AM<br>9/16/2020</div>
</body></html>
